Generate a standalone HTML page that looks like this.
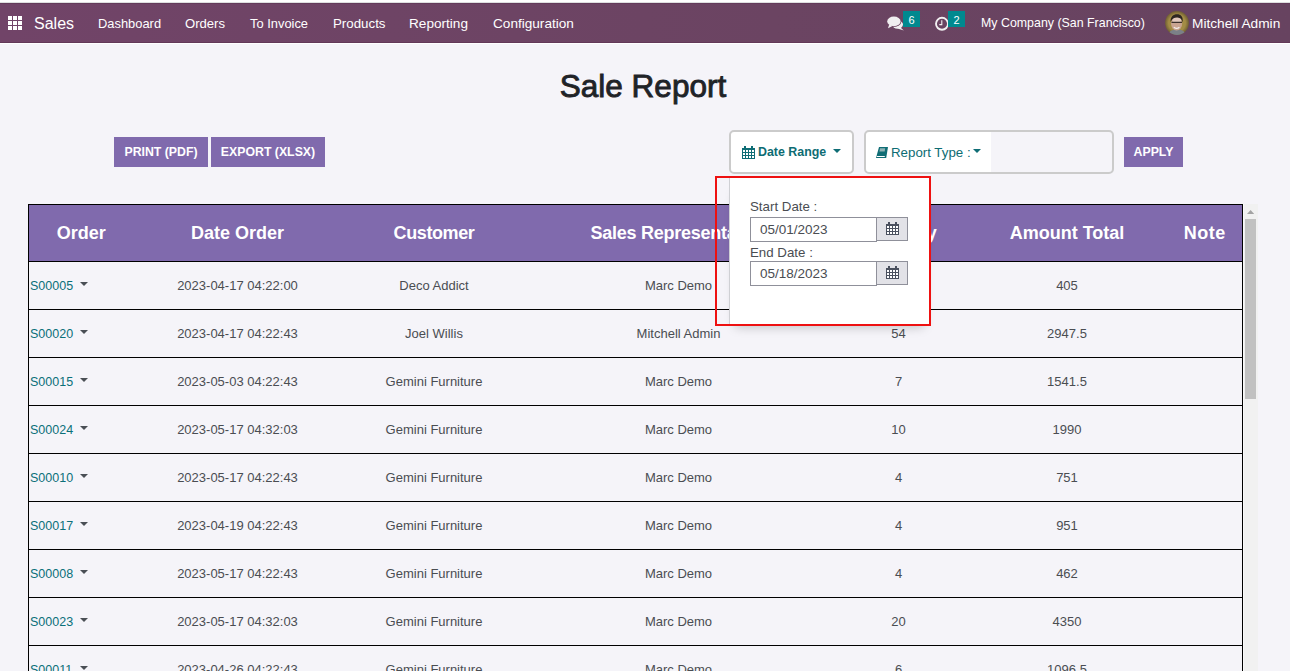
<!DOCTYPE html>
<html><head><meta charset="utf-8">
<style>
*{box-sizing:border-box;margin:0;padding:0}
html,body{width:1290px;height:671px;overflow:hidden;background:#fff;font-family:"Liberation Sans",sans-serif}
#nav{position:absolute;left:0;top:3px;width:1290px;height:40px;background:linear-gradient(90deg,#714468,#6b4462 60%,#674360);border-top:1px solid #643b5b;border-bottom:1px solid #623858;color:#fff}
#topline{position:absolute;left:0;top:2px;width:1290px;height:1px;background:#dedfe0}
#main{position:absolute;left:0;top:43px;width:1290px;height:628px;background:#f5f4f9;border-top:1px solid #fff}
.abs{position:absolute;white-space:nowrap}
.nt{font-size:13px;color:#fff;line-height:15px}
.btn{position:absolute;background:#806aad;color:#fff;font-weight:bold;font-size:12.3px;text-align:center;line-height:30px;height:30px;white-space:nowrap}
#title{position:absolute;left:0;width:1286px;top:68px;text-align:center;font-size:31.5px;font-weight:normal;-webkit-text-stroke:0.9px #1f2327;color:#1f2327;line-height:36px}
.box{position:absolute;border:2px solid #cbcbcb;border-radius:5px}
.teal{color:#0d6c73}
#wrap{position:absolute;left:28px;top:204px;width:1230px;height:467px;overflow:hidden}
table{position:absolute;left:0;top:0;border-collapse:collapse;table-layout:fixed;width:1214px;border-left:1px solid #000;border-right:1px solid #000;border-top:1px solid #000}
th{background:#806aad;color:#fff;font-size:18px;font-weight:bold;height:57px;text-align:center;padding:0;padding-top:1px}
td{height:48px;font-size:13px;color:#4a4d52;text-align:center;padding:0;border-top:1px solid #000;padding-bottom:1px}
td.o{text-align:left;padding-left:1px;color:#0b7079;font-size:12.5px;padding-top:1px;padding-bottom:0}
.on{display:inline-block;width:50px}
.car{display:inline-block;width:0;height:0;border-left:4px solid transparent;border-right:4px solid transparent;border-top:4px solid #4a4f55;vertical-align:middle;margin-left:0;margin-top:-5px}
#sb{position:absolute;left:1215px;top:0;width:15px;height:467px;background:#f1f1f1;border-left:1px solid #fafafa}
#thumb{position:absolute;left:1px;top:15px;width:11px;height:180px;background:#c1c1c1}
#popup{position:absolute;left:729px;top:178px;width:201px;height:146px;background:#fff;border-left:1px solid #cfd0d4;box-shadow:0 9px 10px -6px rgba(0,0,0,.22)}
.lbl{position:absolute;font-size:13.3px;color:#4a4d52;line-height:15px;white-space:nowrap}
.inp{position:absolute;left:20px;width:127px;height:25px;border:1px solid #8f909a;background:#fff;font-size:13.5px;color:#4a4d52;padding-left:9px;line-height:24px}
.add{position:absolute;left:146px;width:32px;height:24px;border:1px solid #8f909a;background:#e2e2e7}
.add svg{position:absolute;left:9px;top:4px}
#red{position:absolute;left:715px;top:176px;width:216px;height:150px;border:2px solid #ee1111}
.badge{position:absolute;top:7px;width:17px;height:16px;background:#00898f;color:#fff;font-size:11px;line-height:18px;text-align:center}
</style></head><body>
<div id="topline"></div>
<div id="nav">
  <svg class="abs" style="left:8px;top:12px" width="14" height="14" viewBox="0 0 14 14" fill="#fff">
    <rect x="0" y="0" width="4" height="4"/><rect x="5" y="0" width="4" height="4"/><rect x="10" y="0" width="4" height="4"/>
    <rect x="0" y="5" width="4" height="4"/><rect x="5" y="5" width="4" height="4"/><rect x="10" y="5" width="4" height="4"/>
    <rect x="0" y="10" width="4" height="4"/><rect x="5" y="10" width="4" height="4"/><rect x="10" y="10" width="4" height="4"/>
  </svg>
  <div class="abs" style="left:34px;top:10px;font-size:16px;line-height:20px">Sales</div>
  <div class="abs nt" style="left:98px;top:12px;font-size:12.9px">Dashboard</div>
  <div class="abs nt" style="left:185px;top:12px;font-size:13.1px">Orders</div>
  <div class="abs nt" style="left:250px;top:12px;font-size:12.9px">To Invoice</div>
  <div class="abs nt" style="left:333px;top:12px;font-size:13.3px">Products</div>
  <div class="abs nt" style="left:409px;top:12px;font-size:13.6px">Reporting</div>
  <div class="abs nt" style="left:493px;top:12px;font-size:13.6px">Configuration</div>
  <svg class="abs" style="left:884px;top:10px" width="22" height="18" viewBox="884 14 22 18">
    <ellipse cx="897.6" cy="24.6" rx="5.4" ry="4.2" fill="#f0eef0"/>
    <path d="M900.5 27.5 L903.8 30.4 L897.5 28.6z" fill="#f0eef0"/>
    <ellipse cx="893.9" cy="21.4" rx="7.4" ry="5.5" fill="#6c4462"/>
    <ellipse cx="893.9" cy="21.4" rx="6.7" ry="4.8" fill="#f0eef0"/>
    <path d="M889.2 24.5 L888 28.3 L893 25.8z" fill="#f0eef0"/>
  </svg>
  <div class="badge" style="left:903px">6</div>
  <svg class="abs" style="left:935px;top:11px" width="14" height="16" viewBox="0 0 14 16">
    <circle cx="7" cy="8.8" r="6" fill="none" stroke="#f2f0f2" stroke-width="1.9"/>
    <path d="M6.8 5.3v4.3H4.3" fill="none" stroke="#f2f0f2" stroke-width="1.1"/>
  </svg>
  <div class="badge" style="left:948px">2</div>
  <div class="abs nt" style="left:981px;top:12px;font-size:12.4px">My Company (San Francisco)</div>
  <svg class="abs" style="left:1165px;top:7px" width="24" height="24" viewBox="0 0 24 24">
    <defs><clipPath id="cc"><circle cx="12" cy="12" r="11.9"/></clipPath><radialGradient id="rg" cx="50%" cy="50%" r="50%"><stop offset="70%" stop-color="#a38c45"/><stop offset="100%" stop-color="#6e5d33"/></radialGradient></defs>
    <g clip-path="url(#cc)">
      <rect width="24" height="24" fill="url(#rg)"/>
      <path d="M3 24 C5 19 8 18.5 12 18.5 C16 18.5 19 19 21 24z" fill="#7b8088"/>
      <ellipse cx="11.6" cy="12.6" rx="5.6" ry="7" fill="#c9a491"/>
      <ellipse cx="11.8" cy="9" rx="4.5" ry="3" fill="#e2c8bd"/>
      <path d="M5.6 11 C5.2 5.5 8.5 3.2 12 3.2 C15.8 3.2 18.5 5.5 17.6 11.5 C16.8 8 15.5 6.6 12.5 6.4 C9.5 6.2 7 7.5 5.6 11z" fill="#2d2622"/>
      <path d="M6.5 11.3h10.5" stroke="#3a302c" stroke-width="1.3"/>
      <path d="M8.8 16.2 C10.5 17.6 12.8 17.6 14.4 16.2" fill="none" stroke="#f4eeea" stroke-width="1.3"/>
    </g>
  </svg>
  <div class="abs nt" style="left:1192px;top:11.5px;font-size:13.7px">Mitchell Admin</div>
</div>
<div id="main"></div>
<div id="title">Sale Report</div>
<div class="btn" style="left:114px;top:137px;width:94px">PRINT (PDF)</div>
<div class="btn" style="left:211px;top:137px;width:114px">EXPORT (XLSX)</div>
<div class="btn" style="left:1124px;top:137px;width:59px">APPLY</div>
<div class="box" style="left:729px;top:130px;width:125px;height:44px;background:#fff">
  <div class="abs" style="left:11px;top:13px"><svg width="13" height="13" viewBox="0 0 13 13"><path fill="#0f6d75" d="M0 2h13v11H0z"/><path fill="#0f6d75" d="M2 0h2v3H2zM9 0h2v3H9z"/><path fill="#fff" d="M1 4h2v2H1zM4 4h2v2H4zM7 4h2v2H7zM10 4h2v2h-2zM1 7h2v2H1zM4 7h2v2H4zM7 7h2v2H7zM10 7h2v2h-2zM1 10h2v2H1zM4 10h2v2H4zM7 10h2v2H7zM10 10h2v2h-2z"/></svg></div>
  <div class="abs teal" style="left:27px;top:13px;font-size:12.4px;font-weight:bold;line-height:15px">Date Range</div>
  <div class="abs" style="left:102px;top:17px;width:0;height:0;border-left:4px solid transparent;border-right:4px solid transparent;border-top:4px solid #0f6d75"></div>
</div>
<div class="box" style="left:864px;top:130px;width:250px;height:44px;background:linear-gradient(90deg,#fff 125px,#f5f4f9 125px)">
  <svg class="abs" style="left:10px;top:15px" width="13" height="12" viewBox="0 0 13 12">
    <path d="M3 0h9L10.2 11H0z" fill="#0f6d75"/>
    <path d="M4 1.3h5.2l-0.5 3.3H3.4z" fill="#8fb3b6"/>
    <path d="M0.9 9h8l-0.2 1H0.7z" fill="#fff"/>
  </svg>
  <div class="abs teal" style="left:25px;top:13px;font-size:13.3px;line-height:15px">Report Type :</div>
  <div class="abs" style="left:107px;top:17px;width:0;height:0;border-left:4px solid transparent;border-right:4px solid transparent;border-top:4px solid #0f6d75"></div>
</div>
<div id="wrap">
<table>
<colgroup><col style="width:105px"><col style="width:208px"><col style="width:185px"><col style="width:304px"><col style="width:136px"><col style="width:201px"><col style="width:75px"></colgroup>
<tr><th>Order</th><th>Date Order</th><th style="letter-spacing:-0.4px">Customer</th><th style="letter-spacing:-0.25px">Sales Representative</th><th style="letter-spacing:0.6px">Quantity</th><th>Amount Total</th><th style="letter-spacing:0.5px">Note</th></tr>
<tr><td class="o"><span class="on">S00005</span><span class="car"></span></td><td>2023-04-17 04:22:00</td><td>Deco Addict</td><td>Marc Demo</td><td>3</td><td>405</td><td></td></tr>
<tr><td class="o"><span class="on">S00020</span><span class="car"></span></td><td>2023-04-17 04:22:43</td><td>Joel Willis</td><td>Mitchell Admin</td><td>54</td><td>2947.5</td><td></td></tr>
<tr><td class="o"><span class="on">S00015</span><span class="car"></span></td><td>2023-05-03 04:22:43</td><td>Gemini Furniture</td><td>Marc Demo</td><td>7</td><td>1541.5</td><td></td></tr>
<tr><td class="o"><span class="on">S00024</span><span class="car"></span></td><td>2023-05-17 04:32:03</td><td>Gemini Furniture</td><td>Marc Demo</td><td>10</td><td>1990</td><td></td></tr>
<tr><td class="o"><span class="on">S00010</span><span class="car"></span></td><td>2023-05-17 04:22:43</td><td>Gemini Furniture</td><td>Marc Demo</td><td>4</td><td>751</td><td></td></tr>
<tr><td class="o"><span class="on">S00017</span><span class="car"></span></td><td>2023-04-19 04:22:43</td><td>Gemini Furniture</td><td>Marc Demo</td><td>4</td><td>951</td><td></td></tr>
<tr><td class="o"><span class="on">S00008</span><span class="car"></span></td><td>2023-05-17 04:22:43</td><td>Gemini Furniture</td><td>Marc Demo</td><td>4</td><td>462</td><td></td></tr>
<tr><td class="o"><span class="on">S00023</span><span class="car"></span></td><td>2023-05-17 04:32:03</td><td>Gemini Furniture</td><td>Marc Demo</td><td>20</td><td>4350</td><td></td></tr>
<tr><td class="o"><span class="on">S00011</span><span class="car"></span></td><td>2023-04-26 04:22:43</td><td>Gemini Furniture</td><td>Marc Demo</td><td>6</td><td>1096.5</td><td></td></tr>
</table>
<div id="sb"><svg style="position:absolute;left:3px;top:5px" width="8" height="6" viewBox="0 0 8 6"><path d="M0 5L3.6 1L7.2 5z" fill="#a3a3a3"/></svg><div id="thumb"></div></div>
</div>
<div id="popup">
  <div class="lbl" style="left:20px;top:21px">Start Date :</div>
  <div class="inp" style="top:39px">05/01/2023</div>
  <div class="add" style="top:39px"><svg width="13" height="13" viewBox="0 0 13 13"><path fill="#4a505e" d="M0 2h13v11H0z"/><path fill="#4a505e" d="M2 0h2v3H2zM9 0h2v3H9z"/><path fill="#fff" d="M1 4h2v2H1zM4 4h2v2H4zM7 4h2v2H7zM10 4h2v2h-2zM1 7h2v2H1zM4 7h2v2H4zM7 7h2v2H7zM10 7h2v2h-2zM1 10h2v2H1zM4 10h2v2H4zM7 10h2v2H7zM10 10h2v2h-2z"/></svg></div>
  <div class="lbl" style="left:20px;top:67px">End Date :</div>
  <div class="inp" style="top:83px">05/18/2023</div>
  <div class="add" style="top:83px"><svg width="13" height="13" viewBox="0 0 13 13"><path fill="#4a505e" d="M0 2h13v11H0z"/><path fill="#4a505e" d="M2 0h2v3H2zM9 0h2v3H9z"/><path fill="#fff" d="M1 4h2v2H1zM4 4h2v2H4zM7 4h2v2H7zM10 4h2v2h-2zM1 7h2v2H1zM4 7h2v2H4zM7 7h2v2H7zM10 7h2v2h-2zM1 10h2v2H1zM4 10h2v2H4zM7 10h2v2H7zM10 10h2v2h-2z"/></svg></div>
</div>
<div id="red"></div>
</body></html>
